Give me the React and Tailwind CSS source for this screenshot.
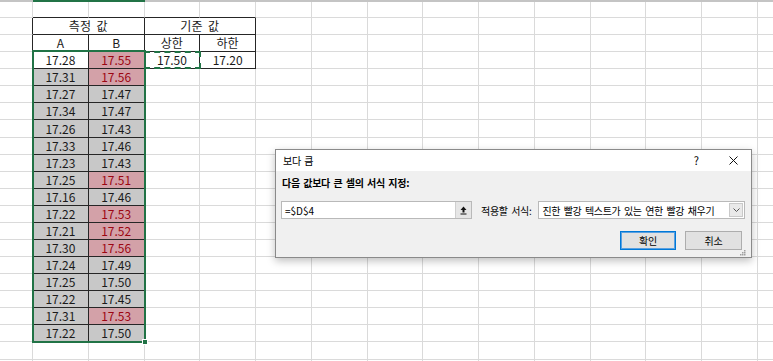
import React from 'react';

const A_VALS = ['17.28', '17.31', '17.27', '17.34', '17.26', '17.33', '17.23', '17.25', '17.16', '17.22', '17.21', '17.30', '17.24', '17.25', '17.22', '17.31', '17.22'];
const B_VALS = ['17.55', '17.56', '17.47', '17.47', '17.43', '17.46', '17.43', '17.51', '17.46', '17.53', '17.52', '17.56', '17.49', '17.50', '17.45', '17.53', '17.50'];
const UPPER = 17.5;

// 셀 하나 — 테두리 색과 배경만 골라서 씀
function Cell({ children, darkR, darkB, fill, red, span }) {
  const r = darkR ? 'border-r-[#262626]' : 'border-r-[#dadada]';
  const b = darkB ? 'border-b-[#262626]' : 'border-b-[#dadada]';
  const bg = fill === 'gray' ? 'bg-[#c8c8c8]' : fill === 'pink' ? 'bg-[#d3a1a8]' : 'bg-white';
  const color = red ? 'text-[#9c0612]' : 'text-[#1a1a1a]';
  return (
    <div
      className={`${span ? 'col-span-2' : ''} border-r border-b ${r} ${b} ${bg} ${color} flex items-center justify-center text-[12px] leading-none [word-spacing:3px]`}
    >
      {children}
    </div>
  );
}

function emptyCells(from, to, key) {
  const out = [];
  for (let i = from; i <= to; i++) out.push(<Cell key={`${key}-${i}`} />);
  return out;
}

function Sheet() {
  const cells = [];

  // 1행
  cells.push(<Cell key="r1-0" />);
  for (let i = 1; i <= 4; i++) cells.push(<Cell key={`r1-${i}`} darkB />);
  cells.push(...emptyCells(5, 14, 'r1'));

  // 2행 병합 헤더
  cells.push(<Cell key="r2-0" darkR />);
  cells.push(<Cell key="r2-1" span darkR darkB>측정 값</Cell>);
  cells.push(<Cell key="r2-3" span darkR darkB>기준 값</Cell>);
  cells.push(...emptyCells(5, 14, 'r2'));

  // 3행
  cells.push(<Cell key="r3-0" darkR />);
  ['A', 'B', '상한', '하한'].forEach((t, i) => cells.push(<Cell key={`r3-${i + 1}`} darkR darkB>{t}</Cell>));
  cells.push(...emptyCells(5, 14, 'r3'));

  // 데이터 행
  A_VALS.forEach((a, idx) => {
    const b = B_VALS[idx];
    const high = parseFloat(b) > UPPER;
    cells.push(<Cell key={`d${idx}-0`} darkR />);
    cells.push(<Cell key={`d${idx}-1`} darkR darkB fill={idx === 0 ? null : 'gray'}>{a}</Cell>);
    cells.push(<Cell key={`d${idx}-2`} darkR darkB fill={high ? 'pink' : 'gray'} red={high}>{b}</Cell>);
    if (idx === 0) {
      cells.push(<Cell key="d0-3" darkR darkB>17.50</Cell>);
      cells.push(<Cell key="d0-4" darkR darkB>17.20</Cell>);
      cells.push(...emptyCells(5, 14, 'd0'));
    } else {
      cells.push(...emptyCells(3, 14, `d${idx}`));
    }
  });

  cells.push(...emptyCells(0, 14, 'r21'));
  cells.push(...emptyCells(0, 14, 'r22'));

  return (
    <div className="relative">
      <div className="flex h-[2px] bg-[#c4c4c4]">
        <div className="w-[33px]" />
        <div className="w-[112px] bg-[#217346]" />
      </div>
      <div className="grid grid-cols-[33px_repeat(14,55.75px)] grid-rows-[16px_repeat(21,17.09px)]">
        {cells}
      </div>

      {/* 선택 영역 */}
      <div className="pointer-events-none absolute left-[32px] top-[50px] h-[293px] w-[114px] border-2 border-[#217346]" />
      <div className="pointer-events-none absolute left-[142px] top-[339px] h-[6px] w-[6px] border border-white bg-[#217346]" />
      {/* 복사 점선 */}
      <div className="pointer-events-none absolute left-[144px] top-[51px] h-[18px] w-[57px] border-2 border-dashed border-[#217346]" />
    </div>
  );
}

function Dialog() {
  return (
    <div className="absolute left-[275px] top-[149px] flex h-[109px] w-[477px] flex-col border border-[#8a8a8a] bg-[#f0f0f0] text-[10px] tracking-[-0.3px] [word-spacing:1.5px] text-black shadow-[0_3px_8px_rgba(0,0,0,0.25)]">
      <div className="flex h-[23px] items-center bg-white pl-[7px]">
        <span>보다 큼</span>
        <span className="ml-auto mr-[30px] text-[11px] tracking-normal">?</span>
        <svg width="9" height="9" viewBox="0 0 9 9" className="mr-[13px]">
          <path d="M0.5 0.5 L8.5 8.5 M8.5 0.5 L0.5 8.5" stroke="#111" strokeWidth="1" />
        </svg>
      </div>

      <div className="flex flex-1 flex-col px-[5px] pt-[6px]">
        <div className="h-[12px] pl-[1px] font-bold leading-[12px]">다음 값보다 큰 셀의 서식 지정:</div>

        <div className="mt-[12px] flex items-center">
          <div className="flex h-[18px] w-[191px] border border-[#b9b9b9] bg-white">
            <div className="flex flex-1 items-center pl-[3px] tracking-normal">=$D$4</div>
            <div className="flex w-[16px] items-center justify-center border-l border-[#cfcfcf] bg-[#e6e6e6]">
              <svg width="7" height="9" viewBox="0 0 7 9">
                <path d="M3.5 0.5 L6.5 4 L4.5 4 L4.5 6.5 L2.5 6.5 L2.5 4 L0.5 4 Z" fill="#111" />
                <rect x="0.5" y="7.5" width="6" height="1" fill="#111" />
              </svg>
            </div>
          </div>
          <span className="ml-[9px]">적용할 서식:</span>
          <div className="ml-[7px] flex h-[18px] w-[207px] items-center border border-[#b9b9b9] bg-white">
            <span className="flex-1 pl-[3px]">진한 빨강 텍스트가 있는 연한 빨강 채우기</span>
            <div className="mr-px flex h-[14px] w-[14px] items-center justify-center border border-[#c9c9c9] bg-[#e9e9e9]">
              <svg width="7" height="4" viewBox="0 0 7 4">
                <path d="M0.5 0.5 L3.5 3.5 L6.5 0.5" stroke="#555" strokeWidth="1" fill="none" />
              </svg>
            </div>
          </div>
        </div>

        <div className="mt-[12px] flex justify-end gap-[9px] pr-[4px]">
          <button className="flex h-[19px] w-[56px] items-center justify-center border border-[#0078d7] bg-[#e1e1e1] shadow-[inset_0_0_0_1px_#5aa0e0]">
            확인
          </button>
          <button className="flex h-[19px] w-[57px] items-center justify-center border border-[#adadad] bg-[#e1e1e1]">
            취소
          </button>
        </div>

        <div className="mt-auto mb-[1px] flex justify-end">
          <svg width="6" height="6" viewBox="0 0 6 6">
            <rect x="4" y="0" width="1.5" height="1.5" fill="#a0a0a0" />
            <rect x="2" y="2" width="1.5" height="1.5" fill="#a0a0a0" />
            <rect x="4" y="2" width="1.5" height="1.5" fill="#a0a0a0" />
            <rect x="0" y="4" width="1.5" height="1.5" fill="#a0a0a0" />
            <rect x="2" y="4" width="1.5" height="1.5" fill="#a0a0a0" />
            <rect x="4" y="4" width="1.5" height="1.5" fill="#a0a0a0" />
          </svg>
        </div>
      </div>
    </div>
  );
}

export default function App() {
  return (
    <div className="relative h-[361px] w-[773px] overflow-hidden bg-white font-['Noto_Sans_CJK_KR',sans-serif]">
      <Sheet />
      <Dialog />
    </div>
  );
}
